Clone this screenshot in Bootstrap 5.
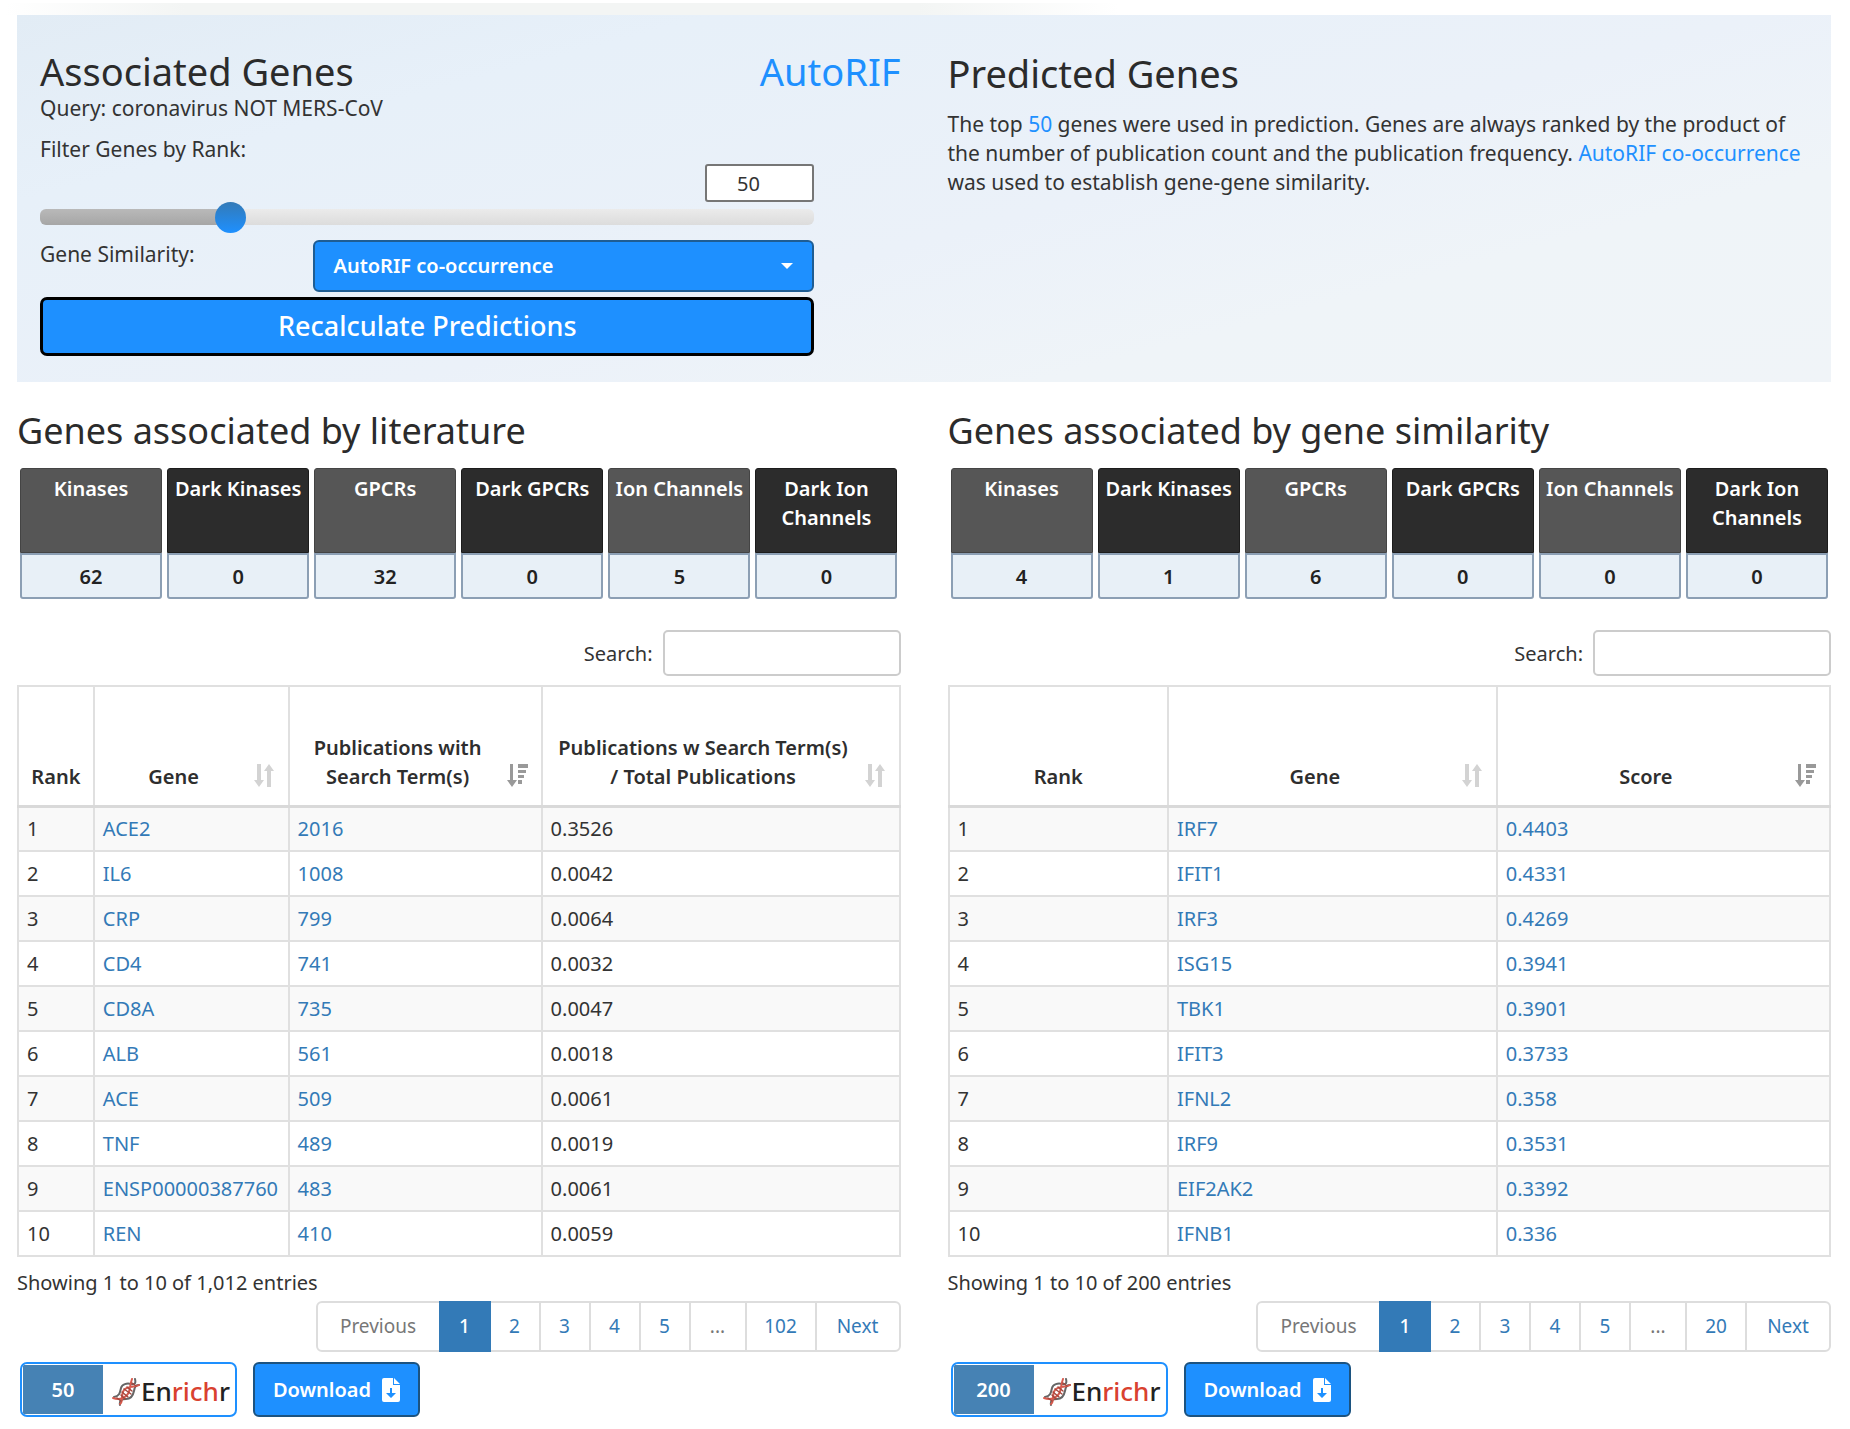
<!DOCTYPE html>
<html lang="en">
<head>
<meta charset="utf-8">
<meta name="viewport" content="width=device-width, initial-scale=1">
<title>Associated and Predicted Genes</title>
<link href="https://cdn.jsdelivr.net/npm/bootstrap@5.3.0/dist/css/bootstrap.min.css" rel="stylesheet">
<style>
body{font-family:"Noto Sans","Open Sans",sans-serif;font-size:20px;line-height:29px;color:#333;background:#fff}
a{color:#337ab7;text-decoration:none}
h2{font-size:36px;line-height:45px;font-weight:400;color:#2b2b2b;margin:0}
.query-panel h2{font-size:38px}
.page-shell{padding:0 19px 0 17px}
.top-fade{height:12px;margin:3px 0 0 -12px;background:linear-gradient(90deg,#fff0 0,#f3f5f4 180px,#f3f5f4 50%,#fff0 61%)}
.query-panel{font-size:21px;background:linear-gradient(165deg,#e2ecf5 0,#e7f0f9 22%,#ebf1f9 55%,#eff4f8 75%,#f0f4f8 100%);padding:34px 0 26px}
.row-wide{--bs-gutter-x:47px}
.pad-start{padding-left:23px}
.blue-link{color:#1e90ff}
.controls{width:90%}
.predicted{padding-top:2px}
.intro{margin:14px 20px 0 0}
.rank-box{font-size:20px;width:109px;height:38px;border:2px solid #767676;border-radius:3px;text-align:center;padding:0 23px 0 0;color:#333;background:#fff;appearance:textfield}
.rank-box::-webkit-inner-spin-button{appearance:none;margin:0}
.slide-track{height:16px;border-radius:6px;background:linear-gradient(#b9b9b9,#a6a6a6) 0 0/25% 100% no-repeat,linear-gradient(#ebebeb,#dcdcdc);margin:7px 0 15px}
.slide-track input{display:block;appearance:none;background:none;width:calc(100% + 30px);height:16px;margin:0 -15px}
.slide-track input::-webkit-slider-thumb{appearance:none;width:31px;height:31px;border-radius:50%;background:linear-gradient(#337ab7,#1e90ff);border:0}
.sim-select{flex:0 0 501px;height:52px;appearance:none;border:2px solid #1f5d93;border-radius:6px;color:#fff;font-size:20px;font-weight:600;padding:0 18px 2px;background:#1e90ff url("data:image/svg+xml,%3Csvg xmlns='http://www.w3.org/2000/svg' viewBox='0 0 12 6'%3E%3Cpath fill='%23fff' d='M0 0h12L6 6z'/%3E%3C/svg%3E") no-repeat right 19px center/12px 6px}
.recalc{height:59px;border:3px solid #000;border-radius:7px;background:#1e90ff;color:#fff;font-size:27px;font-weight:500;margin-top:5px;padding:0}
.lower-row{padding-top:26px}
.tiles{gap:5px;padding:0 3px;margin-top:15px}
.tile{flex:1 1 0;text-align:center;font-weight:600;font-size:20px}
.tile-head{height:85px;background:#565656;border:1px solid #444;border-radius:3px 3px 0 0;color:#fff;padding-top:5px;white-space:nowrap}
.tile:nth-child(even) .tile-head{background:#2c2c2c;border-color:#1c1c1c}
.tile-count{height:46px;border:2px solid #8c9fb4;border-radius:0 0 3px 3px;background:#e8f0f7;color:#222;line-height:44px}
.search-line{margin:31px 0 9px;gap:10px}
.search-line input{width:238px;height:46px;border:2px solid #ccc;border-radius:5px;padding:0 12px}
.gene-table{width:100%;table-layout:fixed;border-collapse:collapse}
.gene-table th,.gene-table td{border:2px solid #e0e0e0;padding:0 8px}
.gene-table td{height:45px;line-height:29px}
.gene-table th{position:relative;height:120px;vertical-align:bottom;text-align:center;font-weight:600;font-size:20px;padding-bottom:14px;border-bottom:3px solid #d9d9d9;color:#2e2e2e}
.gene-table th.sortable{padding-right:43px}
.gene-table tbody tr:nth-child(odd){background:#f9f9f9}
.sort-mark{position:absolute;right:13px;bottom:18px;width:22px;height:23px;fill:#d3d3d3}
.sort-on{fill:#999}
.shown{margin:11px 0 4px}
.pager{--bs-pagination-font-size:19px;--bs-pagination-color:#337ab7;--bs-pagination-border-color:#ddd;--bs-pagination-active-bg:#337ab7;--bs-pagination-active-border-color:#337ab7;--bs-pagination-border-width:2px;--bs-pagination-border-radius:6px;--bs-pagination-disabled-color:#777;--bs-pagination-disabled-bg:#fff;--bs-pagination-disabled-border-color:#ddd;margin:0}
.pager .page-item:not(:first-child) .page-link{margin-left:-2px}
.pager .page-link{padding:9px 0;text-align:center;width:52px}
.pager .active .page-link{font-weight:500}
.pager .w-word .page-link{width:86px}
.pager .w-prev .page-link{width:125px}
.pager .w-dots .page-link{width:58px}
.pager .w-large .page-link{width:72px}
.pager .w-mid .page-link{width:62px}
.actions{gap:16px;padding:0 3px;margin-top:10px}
.enrichr-btn{width:217px;height:55px;border:2px solid #1e90ff;border-radius:7px;background:#fff;padding:1px 0 1px 1px;overflow:hidden}
.enrichr-num{width:80px;background:#4682b4;color:#fff;font-weight:600}
.enrichr-logo{font-size:26px;font-weight:500;color:#222;padding:4px 0 0 9px;gap:1px}
.enrichr-logo b{font-weight:500;color:#d9412f}
.helix{width:28px;height:28px}
.dl-btn{width:167px;height:55px;border:2px solid #1c5380;border-radius:6px;background:#1e90ff;color:#fff;font-size:20px;font-weight:600;padding:0;gap:11px}
</style>
<script src="https://cdn.jsdelivr.net/npm/bootstrap@5.3.0/dist/js/bootstrap.bundle.min.js"></script>
</head>
<body>
<svg width="0" height="0" class="d-none" aria-hidden="true">
<symbol id="sort-both" viewBox="0 0 22 23"><path d="M4 0h4v16h3l-5 7-5-7h3zM14 23V7h-3l5-7 5 7h-3v16z"/></symbol>
<symbol id="sort-desc" viewBox="0 0 22 23"><path d="M4 0h3v16h4l-5 7-5-7h3zM12 0h10v4H12zM12 6h8v3h-8zM12 11h6v3h-6zM12 16h4v4h-4z"/></symbol>
<symbol id="helix" viewBox="0 0 28 28"><g fill="none" stroke-linecap="round"><path d="M2 19c6-1 6-5 7-9s6-5 10-4 5-1 4-5" stroke="#666" stroke-width="2"/><path d="M8 27c-1-5 2-6 6-6s7-3 8-8 2-6 5-6" stroke="#666" stroke-width="2"/><path d="M1 20c5 2 10 1 14-3s2-8 5-16M8 26c4-3 0-9 4-14s10-2 15-5" stroke="#d85a4d" stroke-width="2"/><path d="M5 20l4 3M20 5l4 3M10 14l6 5M12 11l7 5M15 9l5 4M9 17l4 4" stroke="#a3483f" stroke-width="1.5"/></g></symbol>
<symbol id="file-down" viewBox="0 0 18 24"><path fill="#fff" d="M2 0h9v7h7v15a2 2 0 0 1-2 2H2a2 2 0 0 1-2-2V2a2 2 0 0 1 2-2zM12 0l6 6h-6z"/><path fill="#1e90ff" d="M8 10h2v5h4l-5 5-5-5h4z"/></symbol>
</svg>
<div class="container-fluid page-shell">
<div class="top-fade"></div>
<section class="query-panel">
<div class="row row-wide">
<div class="col-6"><div class="pad-start">
<div class="d-flex justify-content-between"><h2>Associated Genes</h2><h2><a class="blue-link" href="#">AutoRIF</a></h2></div>
<div>Query: coronavirus NOT MERS-CoV</div>
<form class="controls" onsubmit="return false">
<div class="mt-2 pt-1"><label for="rank">Filter Genes by Rank:</label></div>
<div class="d-flex justify-content-end"><input class="rank-box" type="number" value="50" aria-label="Rank value"></div>
<div class="slide-track"><input id="rank" type="range" min="1" max="200" value="50"></div>
<div class="d-flex justify-content-between"><label for="sim">Gene Similarity:</label><select id="sim" class="sim-select"><option>AutoRIF co-occurrence</option></select></div>
<button class="btn recalc w-100 d-block" type="submit">Recalculate Predictions</button>
</form>
</div></div>
<div class="col-6">
<h2 class="predicted">Predicted Genes</h2>
<p class="intro">The top <span class="blue-link">50</span> genes were used in prediction. Genes are always ranked by the product of the number of publication count and the publication frequency. <a class="blue-link" href="#">AutoRIF co-occurrence</a> was used to establish gene-gene similarity.</p>
</div>
</div>
</section>
<div class="row row-wide lower-row">
<section class="col-6">
<h2>Genes associated by literature</h2>
<div class="d-flex tiles">
<div class="tile"><div class="tile-head">Kinases</div><div class="tile-count">62</div></div>
<div class="tile"><div class="tile-head">Dark Kinases</div><div class="tile-count">0</div></div>
<div class="tile"><div class="tile-head">GPCRs</div><div class="tile-count">32</div></div>
<div class="tile"><div class="tile-head">Dark GPCRs</div><div class="tile-count">0</div></div>
<div class="tile"><div class="tile-head">Ion Channels</div><div class="tile-count">5</div></div>
<div class="tile"><div class="tile-head">Dark Ion<br>Channels</div><div class="tile-count">0</div></div>
</div>
<div class="d-flex justify-content-end align-items-center search-line"><label for="s1">Search:</label><input id="s1" type="search"></div>
<table class="gene-table">
<colgroup><col style="width:8.6%"><col style="width:22.1%"><col style="width:28.7%"><col style="width:40.6%"></colgroup>
<thead><tr><th>Rank</th><th class="sortable">Gene<svg class="sort-mark"><use href="#sort-both"/></svg></th><th class="sortable">Publications with Search Term(s)<svg class="sort-mark sort-on"><use href="#sort-desc"/></svg></th><th class="sortable">Publications w Search Term(s) /&nbsp;Total Publications<svg class="sort-mark"><use href="#sort-both"/></svg></th></tr></thead>
<tbody>
<tr><td>1</td><td><a href="#">ACE2</a></td><td><a href="#">2016</a></td><td>0.3526</td></tr>
<tr><td>2</td><td><a href="#">IL6</a></td><td><a href="#">1008</a></td><td>0.0042</td></tr>
<tr><td>3</td><td><a href="#">CRP</a></td><td><a href="#">799</a></td><td>0.0064</td></tr>
<tr><td>4</td><td><a href="#">CD4</a></td><td><a href="#">741</a></td><td>0.0032</td></tr>
<tr><td>5</td><td><a href="#">CD8A</a></td><td><a href="#">735</a></td><td>0.0047</td></tr>
<tr><td>6</td><td><a href="#">ALB</a></td><td><a href="#">561</a></td><td>0.0018</td></tr>
<tr><td>7</td><td><a href="#">ACE</a></td><td><a href="#">509</a></td><td>0.0061</td></tr>
<tr><td>8</td><td><a href="#">TNF</a></td><td><a href="#">489</a></td><td>0.0019</td></tr>
<tr><td>9</td><td><a href="#">ENSP00000387760</a></td><td><a href="#">483</a></td><td>0.0061</td></tr>
<tr><td>10</td><td><a href="#">REN</a></td><td><a href="#">410</a></td><td>0.0059</td></tr>
</tbody>
</table>
<div class="shown">Showing 1 to 10 of 1,012 entries</div>
<ul class="pagination pager justify-content-end">
<li class="page-item disabled w-prev"><a class="page-link" href="#">Previous</a></li><li class="page-item active"><a class="page-link" href="#">1</a></li><li class="page-item"><a class="page-link" href="#">2</a></li><li class="page-item"><a class="page-link" href="#">3</a></li><li class="page-item"><a class="page-link" href="#">4</a></li><li class="page-item"><a class="page-link" href="#">5</a></li><li class="page-item disabled w-dots"><a class="page-link" href="#">...</a></li><li class="page-item w-large"><a class="page-link" href="#">102</a></li><li class="page-item w-word"><a class="page-link" href="#">Next</a></li>
</ul>
<div class="d-flex actions">
<button class="d-flex enrichr-btn" type="button"><span class="enrichr-num h-100 d-flex align-items-center justify-content-center">50</span><span class="enrichr-logo d-flex align-items-center h-100"><svg class="helix"><use href="#helix"/></svg><span>En<b>rich</b>r</span></span></button>
<button class="btn dl-btn d-flex align-items-center justify-content-center" type="button">Download<svg width="18" height="24"><use href="#file-down"/></svg></button>
</div>
</section>
<section class="col-6">
<h2>Genes associated by gene similarity</h2>
<div class="d-flex tiles">
<div class="tile"><div class="tile-head">Kinases</div><div class="tile-count">4</div></div>
<div class="tile"><div class="tile-head">Dark Kinases</div><div class="tile-count">1</div></div>
<div class="tile"><div class="tile-head">GPCRs</div><div class="tile-count">6</div></div>
<div class="tile"><div class="tile-head">Dark GPCRs</div><div class="tile-count">0</div></div>
<div class="tile"><div class="tile-head">Ion Channels</div><div class="tile-count">0</div></div>
<div class="tile"><div class="tile-head">Dark Ion<br>Channels</div><div class="tile-count">0</div></div>
</div>
<div class="d-flex justify-content-end align-items-center search-line"><label for="s2">Search:</label><input id="s2" type="search"></div>
<table class="gene-table">
<colgroup><col style="width:24.9%"><col style="width:37.3%"><col style="width:37.8%"></colgroup>
<thead><tr><th>Rank</th><th class="sortable">Gene<svg class="sort-mark"><use href="#sort-both"/></svg></th><th class="sortable">Score<svg class="sort-mark sort-on"><use href="#sort-desc"/></svg></th></tr></thead>
<tbody>
<tr><td>1</td><td><a href="#">IRF7</a></td><td><a href="#">0.4403</a></td></tr>
<tr><td>2</td><td><a href="#">IFIT1</a></td><td><a href="#">0.4331</a></td></tr>
<tr><td>3</td><td><a href="#">IRF3</a></td><td><a href="#">0.4269</a></td></tr>
<tr><td>4</td><td><a href="#">ISG15</a></td><td><a href="#">0.3941</a></td></tr>
<tr><td>5</td><td><a href="#">TBK1</a></td><td><a href="#">0.3901</a></td></tr>
<tr><td>6</td><td><a href="#">IFIT3</a></td><td><a href="#">0.3733</a></td></tr>
<tr><td>7</td><td><a href="#">IFNL2</a></td><td><a href="#">0.358</a></td></tr>
<tr><td>8</td><td><a href="#">IRF9</a></td><td><a href="#">0.3531</a></td></tr>
<tr><td>9</td><td><a href="#">EIF2AK2</a></td><td><a href="#">0.3392</a></td></tr>
<tr><td>10</td><td><a href="#">IFNB1</a></td><td><a href="#">0.336</a></td></tr>
</tbody>
</table>
<div class="shown">Showing 1 to 10 of 200 entries</div>
<ul class="pagination pager justify-content-end">
<li class="page-item disabled w-prev"><a class="page-link" href="#">Previous</a></li><li class="page-item active"><a class="page-link" href="#">1</a></li><li class="page-item"><a class="page-link" href="#">2</a></li><li class="page-item"><a class="page-link" href="#">3</a></li><li class="page-item"><a class="page-link" href="#">4</a></li><li class="page-item"><a class="page-link" href="#">5</a></li><li class="page-item disabled w-dots"><a class="page-link" href="#">...</a></li><li class="page-item w-mid"><a class="page-link" href="#">20</a></li><li class="page-item w-word"><a class="page-link" href="#">Next</a></li>
</ul>
<div class="d-flex actions">
<button class="d-flex enrichr-btn" type="button"><span class="enrichr-num h-100 d-flex align-items-center justify-content-center">200</span><span class="enrichr-logo d-flex align-items-center h-100"><svg class="helix"><use href="#helix"/></svg><span>En<b>rich</b>r</span></span></button>
<button class="btn dl-btn d-flex align-items-center justify-content-center" type="button">Download<svg width="18" height="24"><use href="#file-down"/></svg></button>
</div>
</section>
</div>
</div>
</body>
</html>
